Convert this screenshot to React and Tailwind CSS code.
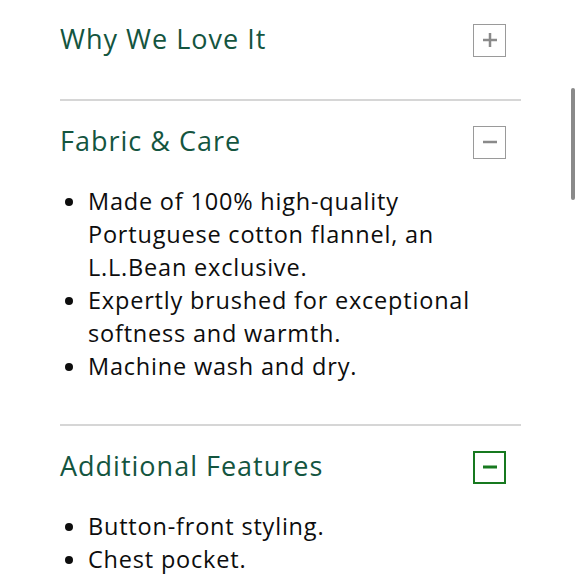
import React from "react";

const font = { fontFamily: '"Open Sans", "Liberation Sans", sans-serif' };

function Box({ minus, green }) {
  return (
    <div
      className={`w-[33px] h-[33px] flex items-center justify-center shrink-0 ${
        green ? "border-2 border-[#17791f]" : "border-[1.5px] border-[#9a9a9a]"
      }`}
    >
      <svg width="20" height="20" viewBox="0 0 20 20">
        <line x1="3" y1="10" x2="17" y2="10" stroke={green ? "#17791f" : "#8a8a8a"} strokeWidth={green ? 3 : 2.5} />
        {!minus && <line x1="10" y1="3" x2="10" y2="17" stroke="#8a8a8a" strokeWidth="2.5" />}
      </svg>
    </div>
  );
}

function Head({ title, minus, green }) {
  return (
    <div className="flex items-center justify-between h-[48px] pr-[15px]">
      <h2 className="text-[27px] tracking-[1px] text-[#14553f] leading-none -mt-[3px]">{title}</h2>
      <Box minus={minus} green={green} />
    </div>
  );
}

const listCls = "list-disc pl-[28px] mt-[19px] text-[23.5px] tracking-[0.8px] leading-[33px] text-[#0d0d0d]";

export default function App() {
  return (
    <div className="relative w-[580px] h-[580px] bg-white overflow-hidden" style={font}>
      <div className="ml-[60px] w-[461px]">
        <section className="pt-[16px] pb-[35px]">
          <Head title="Why We Love It" />
        </section>
        <section className="border-t-2 border-[#d6d6d6] pt-[17px] pb-[41px]">
          <Head title="Fabric & Care" minus />
          <ul className={listCls}>
            <li>Made of 100% high-quality Portuguese cotton flannel, an L.L.Bean exclusive.</li>
            <li>Expertly brushed for exceptional softness and warmth.</li>
            <li>Machine wash and dry.</li>
          </ul>
        </section>
        <section className="border-t-2 border-[#d6d6d6] pt-[17px]">
          <Head title="Additional Features" minus green />
          <ul className={listCls}>
            <li>Button-front styling.</li>
            <li>Chest pocket.</li>
          </ul>
        </section>
      </div>
      <div className="absolute left-[571px] top-[88px] w-[4px] h-[112px] rounded-full bg-[#8a8a8a]" />
    </div>
  );
}
